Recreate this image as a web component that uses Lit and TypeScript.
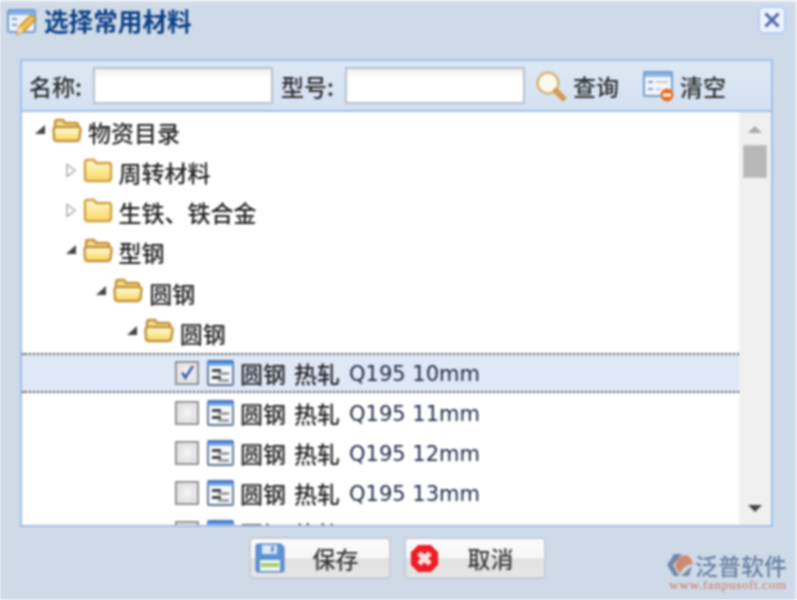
import { LitElement, html, css, svg } from "lit";
import { customElement } from "lit/decorators.js";

const folderOpen = html`<svg class="folder" viewBox="0 0 30 26">
  <defs><linearGradient id="fo" x1="0" y1="0" x2="0" y2="1"><stop offset="0" stop-color="#fffcdc"/><stop offset="1" stop-color="#f7d65c"/></linearGradient></defs>
  <path d="M3 12V5q0-2 2-2h6l2 3h11q2 0 2 2v4" fill="#f3dc8a" stroke="#c4923a" stroke-width="2.4"/>
  <path d="M1.5 13q0-3 3-3h21q3.500 0 3 3l-1 8q-.5 3-3.500 3H5q-3 0-3-3z" fill="url(#fo)" stroke="#c4923a" stroke-width="2.4"/>
</svg>`;
const folderClosed = html`<svg class="folder" viewBox="0 0 30 26">
  <defs><linearGradient id="fc" x1="0" y1="0" x2="0" y2="1"><stop offset="0" stop-color="#fffbd2"/><stop offset="1" stop-color="#f8d760"/></linearGradient></defs>
  <path d="M2 21V5q0-2 2-2h7l2 3h13q2 0 2 2v13q0 3-3 3H5q-3 0-3-3z" fill="url(#fc)" stroke="#d0a044" stroke-width="2.4"/>
</svg>`;
const listIcon = html`<svg class="leaf" viewBox="0 0 27 26">
  <defs><linearGradient id="lh" x1="0" y1="0" x2="0" y2="1"><stop offset="0" stop-color="#2f72dc"/><stop offset="1" stop-color="#9cc2f2"/></linearGradient></defs>
  <rect x="1" y="1" width="25" height="24" rx="1" fill="#f7f9fc" stroke="#566f8e" stroke-width="1.8"/>
  <rect x="1" y="1" width="25" height="5" fill="url(#lh)"/>
  <path d="M5 10.500h9M5 17.500h9" stroke="#222" stroke-width="2.4"/>
  <path d="M11 13.500h11M11 20.500h11" stroke="#777" stroke-width="1.8"/>
</svg>`;

type Row = { depth: number; open: boolean; text: string };
const folders: Row[] = [
  { depth: 0, open: true, text: "物资目录" },
  { depth: 1, open: false, text: "周转材料" },
  { depth: 1, open: false, text: "生铁、铁合金" },
  { depth: 1, open: true, text: "型钢" },
  { depth: 2, open: true, text: "圆钢" },
  { depth: 3, open: true, text: "圆钢" },
];
const leaves = ["10mm", "11mm", "12mm", "13mm", "14mm"];

@customElement("app-root")
export class AppRoot extends LitElement {
  static styles = css`
    :host { display: block; width: 797px; height: 600px; overflow: hidden; font-family: "Noto Sans CJK SC", "Noto Sans", sans-serif; }
    .dialog { position: relative; box-sizing: border-box; width: 797px; height: 600px; background: #cfdae8; border-top: 2px solid #e4eaf2; border-right: 2px solid #e2e8f0; display: flex; flex-direction: column; filter: blur(0.85px); }
    .head { height: 57px; display: flex; align-items: flex-start; padding: 4px 9px 0 7px; box-sizing: border-box; flex: none; }
    .title-icon { width: 30px; height: 30px; margin-top: 1px; flex: none; }
    .title { margin-left: 7px; margin-top: -2px; font-size: 24.6px; font-weight: 700; line-height: 32px; color: #0a3f84; white-space: nowrap; }
    .close { margin-left: auto; width: 28px; height: 28px; box-sizing: border-box; border: 2px solid #b4cef2; border-radius: 6px; background: #eef4fd; display: flex; align-items: center; justify-content: center; }
    .close svg { width: 18px; height: 18px; }
    .panel { margin-left: 20px; width: 753px; height: 468px; box-sizing: border-box; border: 2px solid #a0c0e8; background: #fff; display: flex; flex-direction: column; overflow: hidden; flex: none; }
    .bar { height: 51px; box-sizing: border-box; flex: none; border-bottom: 2px solid #a0c0e8; background: linear-gradient(#dde8f5, #d4e1f1); display: flex; align-items: center; padding-left: 7px; font-size: 23px; font-weight: 500; color: #2b2b2b; }
    .bar label { width: 64px; flex: none; white-space: nowrap; }
    .bar input { width: 180px; height: 37px; box-sizing: border-box; border: 2px solid #b8bfcb; background: linear-gradient(#f0f0f0, #fff 30%); margin: 0 8px 0 0; padding: 0; outline: none; flex: none; }
    .tool { display: flex; align-items: center; white-space: nowrap; }
    .tool svg { flex: none; }
    .search { margin-left: 2px; }
    .search svg { width: 32px; height: 32px; margin-right: 6px; }
    .clear { margin-left: 24px; }
    .clear svg { width: 32px; height: 32px; margin-right: 5px; }
    .body { flex: 1; min-height: 0; display: flex; }
    .tree { flex: 1; min-width: 0; overflow: hidden; }
    .row { height: 40.15px; box-sizing: border-box; display: flex; align-items: center; font-size: 23px; font-weight: 500; color: #222; white-space: nowrap; }
    .row.sel { background: #dfe8f6; border-top: 2px dotted #555; border-bottom: 2px dotted #555; }
    .arrow { width: 14px; height: 14px; flex: none; margin-right: 5px; margin-top: -4px; }
    .folder { width: 30px; height: 26px; flex: none; margin-right: 6px; margin-top: -5px; }
    .check { width: 24px; height: 24px; flex: none; box-sizing: border-box; border: 2px solid #8f8f8f; background: radial-gradient(#f6f6f6, #d8d8d8); margin-left: 153px; display: flex; align-items: center; justify-content: center; box-shadow: inset 0 0 0 1px #eee; }
    .check svg { width: 17px; height: 17px; }
    .leaf { width: 27px; height: 26px; flex: none; margin: 0 6px 0 8px; }
    .cn { margin-right: 8px; }
    .spec { font-family: "DejaVu Sans", sans-serif; font-size: 21px; font-weight: 400; margin-left: 1px; margin-top: 2px; color: #202a48; }
    .scroll { width: 32px; flex: none; background: #f0f0f0; display: flex; flex-direction: column; align-items: center; }
    .up { margin-top: 14px; width: 0; height: 0; border: 7px solid transparent; border-top: 0; border-bottom: 7px solid #a9a9a9; }
    .thumb { margin-top: 12px; width: 24px; height: 33px; background: #b8b8b8; border: 1px solid #c4c4c4; box-sizing: border-box; }
    .down { margin-top: auto; margin-bottom: 13px; width: 0; height: 0; border: 7px solid transparent; border-bottom: 0; border-top: 7px solid #444; }
    .foot { display: flex; justify-content: center; gap: 15px; margin-top: 11px; margin-right: 1px; }
    .btn { width: 140px; height: 40px; box-sizing: border-box; border: 1px solid #c4ccd6; border-radius: 4px; background: linear-gradient(#fbfbfb 0, #f7f7f7 50%, #e1e1e1 52%, #e6e6e6 100%); display: flex; align-items: center; font-size: 23px; font-weight: 500; color: #3a3a3a; box-shadow: 0 0 2px #aeb6c2; }
    .save-icon { width: 32px; height: 32px; margin-left: 3px; flex: none; }
    .save-label { margin-left: 27px; }
    .cancel-icon { width: 29px; height: 29px; margin-left: 4px; flex: none; }
    .cancel-label { margin-left: 29px; }
    .mark { position: absolute; left: 667px; top: 550px; width: 124px; }
    .mark-top { display: flex; align-items: center; }
    .mark-top svg { width: 26px; height: 24px; flex: none; }
    .mark-top span { margin-left: 2px; font-size: 23px; font-weight: 500; line-height: 26px; color: #6880a2; white-space: nowrap; }
    .mark-url { font-family: "Liberation Serif", serif; font-size: 13.4px; line-height: 14px; margin-left: 2px; color: #c87a60; letter-spacing: 0.55px; white-space: nowrap; }
  `;

  render() {
    return html`<div class="dialog">
      <div class="head">
        <svg class="title-icon" viewBox="0 0 30 30">
          <rect x="1" y="3" width="27" height="22" rx="2" fill="#eef3fa" stroke="#6f9bd1" stroke-width="2"/>
          <rect x="2" y="4" width="25" height="4" fill="#86b0e3"/>
          <path d="M5 12h5M5 18h5" stroke="#6f9bd1" stroke-width="2"/>
          <path d="M10 27l2-7L24 8l5 4-12 12z" fill="#f4c152" stroke="#c98a2c" stroke-width="1.500"/>
          <path d="M10 27l2-7 5 4z" fill="#f7e2b4"/>
        </svg>
        <div class="title">选择常用材料</div>
        <div class="close"><svg viewBox="0 0 18 18"><path d="M2.500 2.500l13 13M15.500 2.500l-13 13" stroke="#4a66ae" stroke-width="3"/></svg></div>
      </div>
      <div class="panel">
        <div class="bar">
          <label>名称:</label><input />
          <label>型号:</label><input />
          <div class="tool search">
            <svg viewBox="0 0 32 32">
              <circle cx="13" cy="13" r="10.500" fill="#fbf8ef" stroke="#d9b27a" stroke-width="2.500"/>
              <path d="M21 21l7 7" stroke="#d59a4e" stroke-width="6" stroke-linecap="round"/>
            </svg>查询
          </div>
          <div class="tool clear">
            <svg viewBox="0 0 32 32">
              <rect x="1" y="2" width="28" height="24" rx="1" fill="#f3f6fb" stroke="#6f9bd1" stroke-width="2"/>
              <rect x="2" y="3" width="26" height="4" fill="#8fb5e6"/>
              <path d="M5 12h5M5 19h5" stroke="#6f9bd1" stroke-width="2"/>
              <path d="M13 12h12M13 19h5" stroke="#bbb" stroke-width="1.500"/>
              <circle cx="24" cy="25" r="6.500" fill="#ea6a1c"/>
              <rect x="20" y="23.500" width="8" height="3" fill="#fff"/>
            </svg>清空
          </div>
        </div>
        <div class="body">
          <div class="tree">
            ${folders.map(
              (f) => html`<div class="row" style="padding-left:${11 + f.depth * 30.6}px">
                <svg class="arrow" viewBox="0 0 14 14">
                  ${f.open
                    ? svg`<path d="M2 11h10V2z" fill="#444"/>`
                    : svg`<path d="M3 1.500l8 6-8 6z" fill="#fff" stroke="#aaa" stroke-width="1.500"/>`}
                </svg>
                ${f.open ? folderOpen : folderClosed}<span>${f.text}</span>
              </div>`
            )}
            ${leaves.map(
              (l, i) => html`<div class="row ${i === 0 ? "sel" : ""}">
                <div class="check">
                  ${i === 0
                    ? html`<svg viewBox="0 0 16 16"><path d="M3 8l3 5 7-11" fill="none" stroke="#3f5ab4" stroke-width="2.500"/></svg>`
                    : ""}
                </div>
                ${listIcon}<span class="cn">圆钢</span><span class="cn">热轧</span><span class="spec">Q195 ${l}</span>
              </div>`
            )}
          </div>
          <div class="scroll"><div class="up"></div><div class="thumb"></div><div class="down"></div></div>
        </div>
      </div>
      <div class="foot">
        <div class="btn">
          <svg class="save-icon" viewBox="0 0 32 32">
            <path d="M2 4q0-2 2-2h23l3 3v23q0 2-2 2H4q-2 0-2-2z" fill="#5d93d6" stroke="#4a7cbc"/>
            <rect x="8" y="3" width="15" height="9" fill="#dbe8f7"/>
            <rect x="17" y="4" width="3" height="6" fill="#6f9ad0"/>
            <rect x="6" y="18" width="20" height="11" fill="#f2f6ea"/>
            <rect x="7" y="21" width="18" height="4" fill="#a8cc7a"/>
          </svg>
          <span class="save-label">保存</span>
        </div>
        <div class="btn">
          <svg class="cancel-icon" viewBox="0 0 32 32">
            <path d="M9 1h14l8 8v14l-8 8H9l-8-8V9z" fill="#ee1c25"/>
            <path d="M10 10l12 12M22 10L10 22" stroke="#fbe0e0" stroke-width="6"/>
          </svg>
          <span class="cancel-label">取消</span>
        </div>
      </div>
      <div class="mark">
        <div class="mark-top">
          <svg viewBox="0 0 26 24">
            <path d="M7 1h8L6 12l6 11H7L0 12z" fill="#7288a8"/>
            <path d="M8 13Q10 4 17 2q7 0 9 9-9 0-13 10z" fill="#cf8a72"/>
            <path d="M14 23l11-10-3 10z" fill="#7288a8"/>
          </svg>
          <span>泛普软件</span>
        </div>
        <div class="mark-url">www.fanpusoft.com</div>
      </div>
    </div>`;
  }
}
